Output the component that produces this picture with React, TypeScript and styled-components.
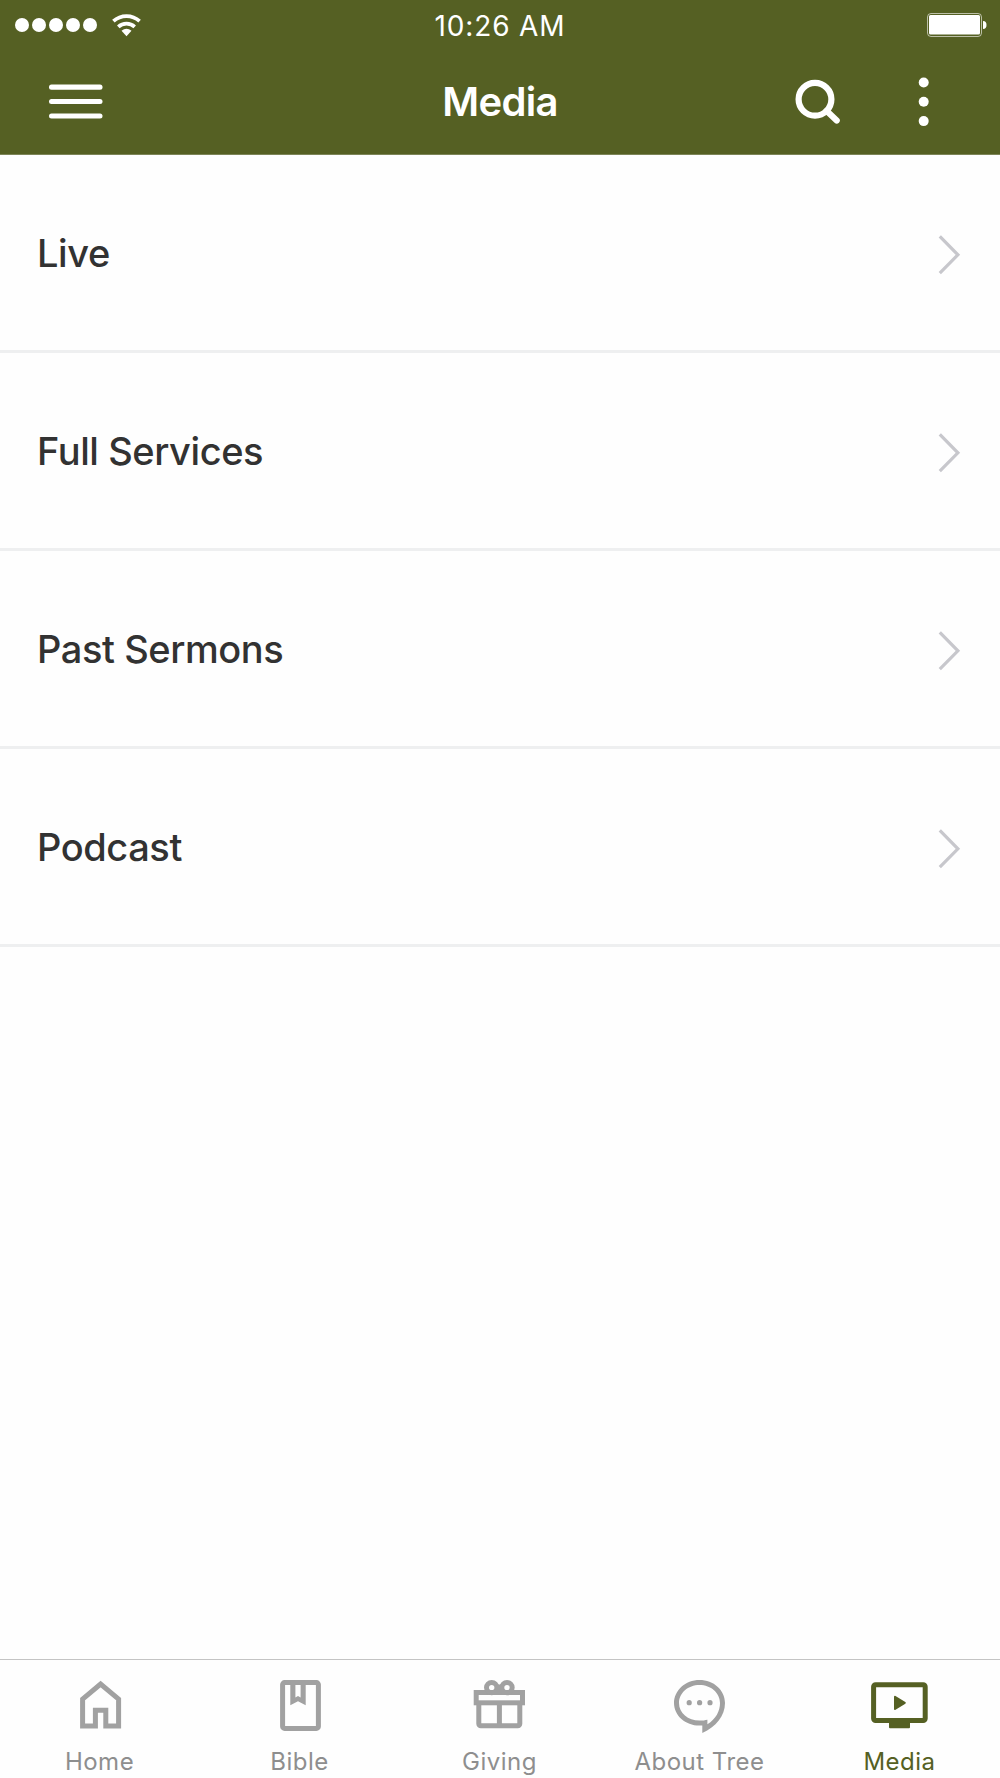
import React from 'react';
import styled, { createGlobalStyle } from 'styled-components';

const OLIVE = '#556023';

const GlobalStyle = createGlobalStyle`
  *, *::before, *::after { box-sizing: border-box; }
  body { margin: 0; background: #fff; }
  button { font: inherit; border: 0; margin: 0; padding: 0; background: none; color: inherit; }
  svg { display: block; overflow: visible; }
`;

const Screen = styled.div`
  display: flex;
  flex-direction: column;
  width: 1000px;
  height: 1778px;
  background: #fefefe;
  font-family: Inter, Roboto, 'Liberation Sans', sans-serif;
`;

const Header = styled.header`
  display: flex;
  flex-direction: column;
  height: 155px;
  background: ${OLIVE};
  border-bottom: 1px solid #7d8557;
  color: #fff;
`;

const StatusBar = styled.div`
  display: grid;
  grid-template-columns: 1fr auto 1fr;
  align-items: center;
  height: 50px;
  padding: 0 15px;
`;

const Signal = styled.div`
  display: flex;
  align-items: center;
  gap: 15px;
`;

const Dots = styled.div`
  display: flex;
  gap: 3px;
`;

const SignalDot = styled.span`
  width: 14px;
  height: 14px;
  border-radius: 50%;
  background: #fff;
`;

const Clock = styled.time`
  padding-top: 2px;
  font-size: 28px;
  line-height: 34px;
  letter-spacing: 0.85px;
`;

const BatterySlot = styled.div`
  display: flex;
  justify-content: flex-end;
`;

const NavBar = styled.div`
  display: grid;
  grid-template-columns: 1fr auto 1fr;
  align-items: center;
  height: 103px;
  padding: 0 49px;
`;

const Title = styled.h1`
  margin: 0;
  font-size: 40px;
  line-height: 48px;
  font-weight: 600;
  letter-spacing: -0.7px;
`;

const Actions = styled.div`
  display: flex;
  justify-content: flex-end;
  align-items: center;
  gap: 76px;
`;

const IconButton = styled.button`
  display: flex;
`;

const List = styled.ul`
  flex: 1;
  margin: 0;
  padding: 0;
  list-style: none;
`;

const Row = styled.li`
  display: flex;
  align-items: center;
  justify-content: space-between;
  height: 198px;
  padding: 0 39px 0 37px;
  border-bottom: 3px solid #eeeff0;
`;

const RowLabel = styled.span`
  font-size: 38px;
  line-height: 46px;
  font-weight: 500;
  letter-spacing: -0.42px;
  color: #323232;
`;

const TabBar = styled.nav`
  display: grid;
  grid-template-columns: repeat(5, 1fr);
  height: 119px;
  border-top: 1px solid #c4c4c4;
`;

const Tab = styled.button<{ $active?: boolean }>`
  display: flex;
  flex-direction: column;
  align-items: center;
  gap: 13px;
  padding-top: 15px;
  color: ${(p) => (p.$active ? OLIVE : '#a1a1a1')};
`;

const TabLabel = styled.span<{ $active?: boolean }>`
  margin-left: -1px;
  font-size: 24px;
  line-height: 28px;
  letter-spacing: 0.5px;
  color: ${(p) => (p.$active ? OLIVE : '#8e8e8e')};
`;

const WifiIcon = () => (
  <svg width="29" height="23" viewBox="0 0 29 23" fill="none" stroke="#fff" strokeWidth="3.7">
    <path d="M1.4 7.2a19.4 19.4 0 0 1 26.2 0" />
    <path d="M6.3 12.8a12 12 0 0 1 16.4 0" />
    <path d="M14.5 22.3 9.5 16.8a8 8 0 0 1 10 0Z" fill="#fff" stroke="none" />
  </svg>
);

const BatteryIcon = () => (
  <svg width="58" height="24" viewBox="0 0 58 24">
    <rect x="0.5" y="0.5" width="54" height="23" rx="3.5" fill="none" stroke="#fff" strokeOpacity="0.6" />
    <rect x="2" y="2" width="51" height="19.6" rx="1.5" fill="#fff" />
    <path d="M56 8a3.5 4 0 0 1 0 8Z" fill="#fff" />
  </svg>
);

const MenuIcon = () => (
  <svg width="54" height="36" viewBox="0 0 54 36" fill="#fff">
    <rect x="0" y="0.5" width="53.5" height="5.2" rx="2.5" />
    <rect x="0" y="14.9" width="53.5" height="5.2" rx="2.5" />
    <rect x="0" y="29.4" width="53.5" height="5.2" rx="2.5" />
  </svg>
);

const SearchIcon = () => (
  <svg width="45" height="46" viewBox="0 0 45 46" fill="none" stroke="#fff" strokeWidth="6.2">
    <circle cx="20" cy="20.3" r="16.4" />
    <path d="M31.5 31.8 41.7 41.5" strokeLinecap="round" />
  </svg>
);

const MoreIcon = () => (
  <svg width="35" height="50" viewBox="0 0 35 50" fill="#fff">
    <circle cx="7.7" cy="5.5" r="5" />
    <circle cx="7.7" cy="24.8" r="5" />
    <circle cx="7.7" cy="44.1" r="5" />
  </svg>
);

const Chevron = () => (
  <svg width="22" height="44" viewBox="0 0 22 44" fill="none" stroke="#c7c7cc" strokeWidth="3.2">
    <path d="M0.8 5.4 18.9 23.8 0.8 42.2" />
  </svg>
);

const TabIcon = ({ children }: { children: React.ReactNode }) => (
  <svg width="60" height="60" viewBox="0 0 60 60" fill="none" stroke="currentColor" strokeWidth="5">
    {children}
  </svg>
);

const HomeIcon = () => (
  <TabIcon>
    <path d="M12.6 24.2 30.6 9l18 15.2V51H35.8V35.2H25.4V51H12.6Z" />
  </TabIcon>
);

const BibleIcon = () => (
  <TabIcon>
    <rect x="12.6" y="7.6" width="35.8" height="45.8" rx="2" />
    <path
      d="M20.3 6V30.3L28 26.3l7.7 4V6ZM25.4 10V22.6L28 21.1l2.6 1.5V10Z"
      fill="currentColor"
      fillRule="evenodd"
      stroke="none"
    />
  </TabIcon>
);

const GiftIcon = () => (
  <TabIcon>
    <rect x="6.2" y="17.5" width="46.3" height="10.3" />
    <path d="M8.8 28V48.8a2 2 0 0 0 2 2H47.8a2 2 0 0 0 2-2V28M29.4 28V50" />
    <circle cx="21.7" cy="12.6" r="5.2" />
    <circle cx="37" cy="12.6" r="5.2" />
    <path d="M25 17 27 9.5H31.8L34 17Z" fill="currentColor" stroke="none" />
  </TabIcon>
);

const ChatIcon = () => (
  <TabIcon>
    <g fill="currentColor" stroke="none">
      <path
        fillRule="evenodd"
        d="M32.3 50.6H29.5C15.4 50.6 4 40.5 4 28S15.4 5 29.5 5 55 15 55 28C55 41 46 52 32.3 57.9ZM29.5 45.6C33 45.6 35 45.2 37.4 44.7V49.3C46 44 50 36 50 28 50 18 41 10 29.5 10S9 18 9 28 18 45.6 29.5 45.6Z"
      />
      <circle cx="19.2" cy="27.7" r="2.6" />
      <circle cx="29.6" cy="27.7" r="2.6" />
      <circle cx="40" cy="27.7" r="2.6" />
    </g>
  </TabIcon>
);

const MediaIcon = () => (
  <TabIcon>
    <rect x="3.6" y="9.8" width="51.6" height="35.7" rx="2" />
    <path d="M19 46H40V52.3a1 1 0 0 1-1 1H20a1 1 0 0 1-1-1Z" fill="currentColor" stroke="none" />
    <path d="M25 21.8 34.8 27.8 25 33.9Z" fill="currentColor" strokeWidth="2" strokeLinejoin="round" />
  </TabIcon>
);

const rows = ['Live', 'Full Services', 'Past Sermons', 'Podcast'];

const tabs = [
  { label: 'Home', Icon: HomeIcon },
  { label: 'Bible', Icon: BibleIcon },
  { label: 'Giving', Icon: GiftIcon },
  { label: 'About Tree', Icon: ChatIcon },
  { label: 'Media', Icon: MediaIcon, active: true },
];

export default function App() {
  return (
    <Screen>
      <GlobalStyle />
      <Header>
        <StatusBar>
          <Signal>
            <Dots>
              {[0, 1, 2, 3, 4].map((n) => (
                <SignalDot key={n} />
              ))}
            </Dots>
            <WifiIcon />
          </Signal>
          <Clock>10:26 AM</Clock>
          <BatterySlot>
            <BatteryIcon />
          </BatterySlot>
        </StatusBar>
        <NavBar>
          <IconButton aria-label="Menu">
            <MenuIcon />
          </IconButton>
          <Title>Media</Title>
          <Actions>
            <IconButton aria-label="Search">
              <SearchIcon />
            </IconButton>
            <IconButton aria-label="More">
              <MoreIcon />
            </IconButton>
          </Actions>
        </NavBar>
      </Header>
      <List>
        {rows.map((label) => (
          <Row key={label}>
            <RowLabel>{label}</RowLabel>
            <Chevron />
          </Row>
        ))}
      </List>
      <TabBar>
        {tabs.map(({ label, Icon, active }) => (
          <Tab key={label} $active={active}>
            <Icon />
            <TabLabel $active={active}>{label}</TabLabel>
          </Tab>
        ))}
      </TabBar>
    </Screen>
  );
}
